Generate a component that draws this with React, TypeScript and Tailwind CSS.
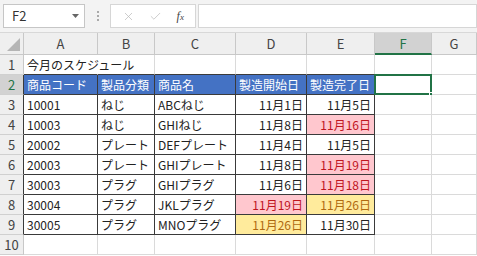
import { Check, X } from "lucide-react";

type Fill = "pink" | "yellow" | undefined;
type Cell = { text: string; align?: "right"; fill?: Fill };

const cols = ["A", "B", "C", "D", "E", "F", "G"];

const rows: Cell[][] = [
  [{ text: "今月のスケジュール" }],
  [
    { text: "商品コード" },
    { text: "製品分類" },
    { text: "商品名" },
    { text: "製造開始日" },
    { text: "製造完了日" },
  ],
  [
    { text: "10001" },
    { text: "ねじ" },
    { text: "ABCねじ" },
    { text: "11月1日", align: "right" },
    { text: "11月5日", align: "right" },
  ],
  [
    { text: "10003" },
    { text: "ねじ" },
    { text: "GHIねじ" },
    { text: "11月8日", align: "right" },
    { text: "11月16日", align: "right", fill: "pink" },
  ],
  [
    { text: "20002" },
    { text: "プレート" },
    { text: "DEFプレート" },
    { text: "11月4日", align: "right" },
    { text: "11月5日", align: "right" },
  ],
  [
    { text: "20003" },
    { text: "プレート" },
    { text: "GHIプレート" },
    { text: "11月8日", align: "right" },
    { text: "11月19日", align: "right", fill: "pink" },
  ],
  [
    { text: "30003" },
    { text: "プラグ" },
    { text: "GHIプラグ" },
    { text: "11月6日", align: "right" },
    { text: "11月18日", align: "right", fill: "pink" },
  ],
  [
    { text: "30004" },
    { text: "プラグ" },
    { text: "JKLプラグ" },
    { text: "11月19日", align: "right", fill: "pink" },
    { text: "11月26日", align: "right", fill: "yellow" },
  ],
  [
    { text: "30005" },
    { text: "プラグ" },
    { text: "MNOプラグ" },
    { text: "11月26日", align: "right", fill: "yellow" },
    { text: "11月30日", align: "right" },
  ],
  [],
];

const font = { fontFamily: '"Noto Sans CJK JP", "Liberation Sans", sans-serif' };

const Toolbar = () => (
  <div className="flex h-[33px] items-start bg-[#f3f3f3] pt-[4px] pl-[3px] border-b border-[#d8d8d8]">
    <div className="flex h-[24px] w-[82px] items-center justify-between border border-[#c6c6c6] bg-white pl-[8px] pr-[5px] text-[13px] text-[#333]">
      <span>F2</span>
      <svg width="7" height="4" viewBox="0 0 7 4">
        <path d="M0 0h7L3.5 4z" fill="#666" />
      </svg>
    </div>
    <div className="flex h-[24px] w-[25px] flex-col items-center justify-center gap-[2px]">
      <span className="h-[2px] w-[2px] bg-[#aaa]" />
      <span className="h-[2px] w-[2px] bg-[#aaa]" />
      <span className="h-[2px] w-[2px] bg-[#aaa]" />
    </div>
    <div className="flex h-[24px] w-[86px] items-center justify-around border border-[#d6d6d6] bg-white px-[4px] text-[#b8b8b8]">
      <X className="h-[13px] w-[13px]" strokeWidth={1.3} />
      <Check className="h-[13px] w-[13px]" strokeWidth={1.3} />
      <span
        className="text-[12px] italic text-[#444]"
        style={{ fontFamily: '"Liberation Serif", serif' }}
      >
        f<span className="text-[9px]">x</span>
      </span>
    </div>
    <div className="ml-[2px] h-[24px] flex-1 border border-[#d6d6d6] bg-white" />
  </div>
);

const widths = "grid-cols-[24px_74px_57px_81px_71px_68px_57px_1fr]";

const App = () => {
  return (
    <div className="h-[256px] w-[477px] overflow-hidden bg-white" style={font}>
      <Toolbar />
      <div className={`grid ${widths} grid-rows-[22px_repeat(10,20px)]`}>
        <div className="relative border-b border-r border-[#c8c8c8] bg-[#efefef]">
          <svg className="absolute right-[3px] bottom-[3px]" width="13" height="13" viewBox="0 0 13 13">
            <path d="M13 0V13H0z" fill="#b5b5b5" />
          </svg>
        </div>
        {cols.map((c) => (
          <div
            key={c}
            className={
              c === "F"
                ? "flex items-center justify-center border-b-2 border-r border-b-[#217346] border-r-[#c8c8c8] bg-[#d2d2d2] pt-[2px] text-[13px] text-[#217346]"
                : "flex items-center justify-center border-b border-r border-[#c8c8c8] bg-[#efefef] text-[13px] text-[#444]"
            }
          >
            {c}
          </div>
        ))}
        {rows.map((row, r) => {
          const rn = r + 1;
          const inTable = rn >= 2 && rn <= 9;
          return [
            <div
              key={`h${rn}`}
              className={`flex items-center justify-center border-b border-r border-b-[#d0d0d0] text-[13px] ${
                inTable ? "border-r-[#3a3a3a]" : "border-r-[#c8c8c8]"
              } ${rn === 2 ? "bg-[#d2d2d2] text-[#217346]" : "bg-[#efefef] text-[#444]"}`}
            >
              {rn}
            </div>,
            ...cols.map((c, ci) => {
              const cell = row[ci];
              const tableCol = ci <= 4;
              const dark = inTable && tableCol;
              const aboveTable = rn === 1 && tableCol;
              const overflowCell = rn === 1 && ci === 0;
              let bg = "bg-white";
              let color = "text-[#222]";
              if (rn === 2 && tableCol) {
                bg = "bg-[#4472c4]";
                color = "text-white";
              } else if (cell?.fill === "pink") {
                bg = "bg-[#ffc7ce]";
                color = "text-[#c0141e]";
              } else if (cell?.fill === "yellow") {
                bg = "bg-[#ffeb9c]";
                color = "text-[#b06a10]";
              }
              const selected = rn === 2 && c === "F";
              return (
                <div
                  key={`${rn}${c}`}
                  className={`relative flex items-center whitespace-nowrap border-b border-r px-[3px] text-[12px] ${bg} ${color} ${
                    dark ? "border-r-[#3a3a3a]" : overflowCell ? "border-r-white" : "border-r-[#dadada]"
                  } ${dark || aboveTable ? "border-b-[#3a3a3a]" : "border-b-[#dadada]"} ${
                    cell?.align === "right" ? "justify-end" : "justify-start"
                  } ${overflowCell ? "z-10 overflow-visible" : ""}`}
                >
                  {cell?.text}
                  {selected && (
                    <>
                      <div className="absolute -top-[1px] -left-[1px] -right-[1px] -bottom-[1px] border-2 border-[#217346]" />
                      <div className="absolute -right-[3px] -bottom-[3px] h-[5px] w-[5px] border border-white bg-[#217346]" />
                    </>
                  )}
                </div>
              );
            }),
          ];
        })}
      </div>
    </div>
  );
};

export default App;
